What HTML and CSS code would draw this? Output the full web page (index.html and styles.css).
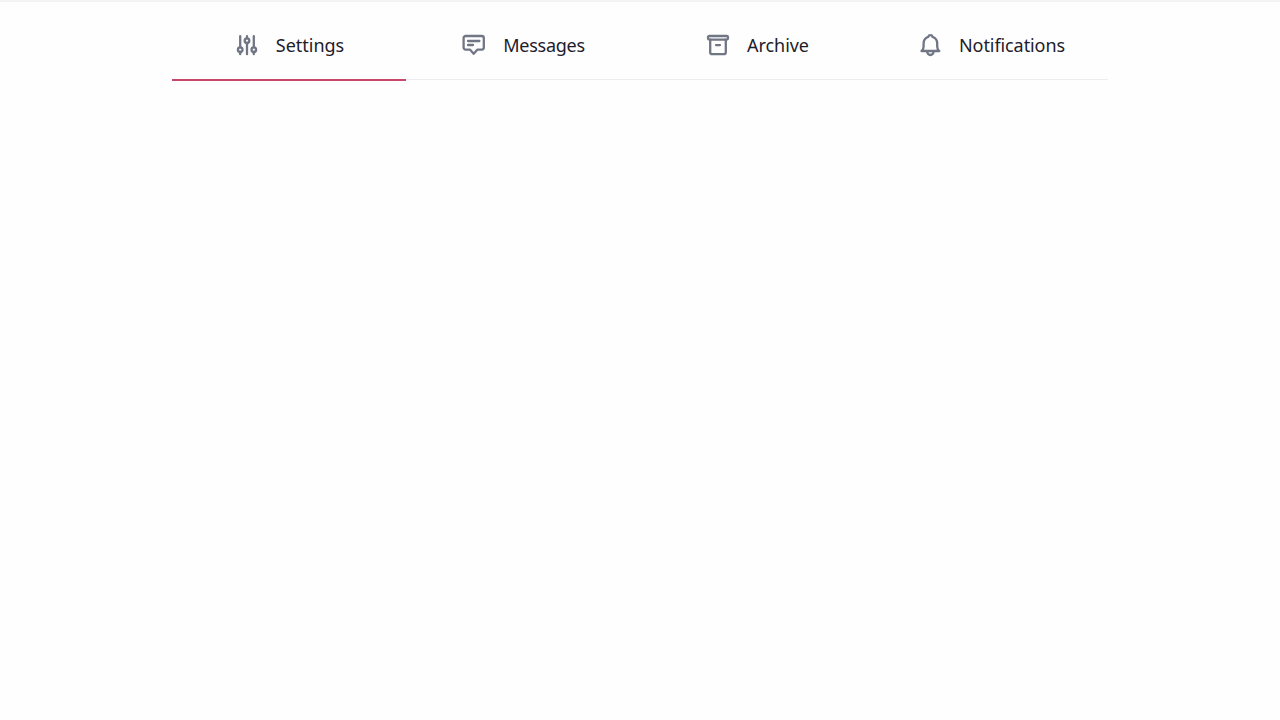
FILE: index.html
```
<!DOCTYPE html>
<html lang="en">
<head>
    <meta charset="UTF-8">
    <meta name="viewport" content="width=device-width, initial-scale=1.0">
    <title>Tabs</title>
    <link rel="stylesheet" href="styles.css">
</head>
<body>
    <nav class="tabs">
        <a class="tab active">
            <svg class="icon" viewBox="0 0 24 24">
                <path d="M5.2 3.2v11.2M5.2 19v2.2M12 3.2v2.2M12 10v11.2M18.8 3.2v11.2M18.8 19v2.2"/>
                <circle cx="5.2" cy="16.7" r="2.3"/>
                <circle cx="12" cy="7.7" r="2.3"/>
                <circle cx="18.8" cy="16.7" r="2.3"/>
            </svg>
            <span class="label">Settings</span>
        </a>
        <a class="tab">
            <svg class="icon" viewBox="0 0 24 24">
                <path d="M3.6 3H19.8a2 2 0 0 1 2 2V14.6a2 2 0 0 1-2 2H15.5L11.7 20.8 7.9 16.6H3.6a2 2 0 0 1-2-2V5a2 2 0 0 1 2-2z"/>
                <path d="M6 8h11.4M6 12h5"/>
            </svg>
            <span class="label messages">Messages</span>
        </a>
        <a class="tab">
            <svg class="icon" viewBox="0 0 24 24">
                <rect x="2" y="3" width="20" height="3.6" rx="1.3"/>
                <path d="M4.2 6.6V19.2a2 2 0 0 0 2 2H17.8a2 2 0 0 0 2-2V6.6M10 12.1h4"/>
            </svg>
            <span class="label archive">Archive</span>
        </a>
        <a class="tab">
            <svg class="icon" viewBox="0 0 24 24">
                <path d="M3.5 18H21.3C19.7 16.8 19.2 15.6 19.2 13.5V10.4C19.2 7.2 17.4 4.8 14.6 3.8a2.3 2.3 0 0 0-4.4 0C7.4 4.8 5.6 7.2 5.6 10.4V13.5C5.6 15.6 5.1 16.8 3.5 18z"/>
                <path d="M9.2 18.4a3.2 3.6 0 0 0 6.4 0"/>
            </svg>
            <span class="label notifications">Notifications</span>
        </a>
    </nav>
</body>
</html>
```
FILE: styles.css
```
* {
    box-sizing: border-box;
}

body {
    margin: 0;
    background: #fefefe;
    border-top: 2px solid #f3f3f4;
    font-family: 'Noto Sans', sans-serif;
    font-size: 18px;
    color: #1c202b;
}

.tabs {
    display: grid;
    grid-template-columns: repeat(4, 1fr);
    width: 936px;
    height: 79px;
    margin: 0 auto;
}

.tab {
    display: flex;
    align-items: center;
    justify-content: center;
    gap: 17px;
    height: 78px;
    padding: 9px 0 0 1px;
    border-bottom: 1px solid #eeeef0;
    cursor: pointer;
}

.tab.active {
    height: 79px;
    border-bottom: 2px solid #c74868;
}

.icon {
    width: 24px;
    height: 24px;
    flex: none;
    fill: none;
    stroke: #717685;
    stroke-width: 2.3;
    stroke-linecap: round;
    stroke-linejoin: round;
}

.label {
    line-height: 24px;
    white-space: nowrap;
}

.messages {
    letter-spacing: -0.25px;
}

.archive {
    letter-spacing: -0.05px;
}

.notifications {
    letter-spacing: -0.08px;
}
```
